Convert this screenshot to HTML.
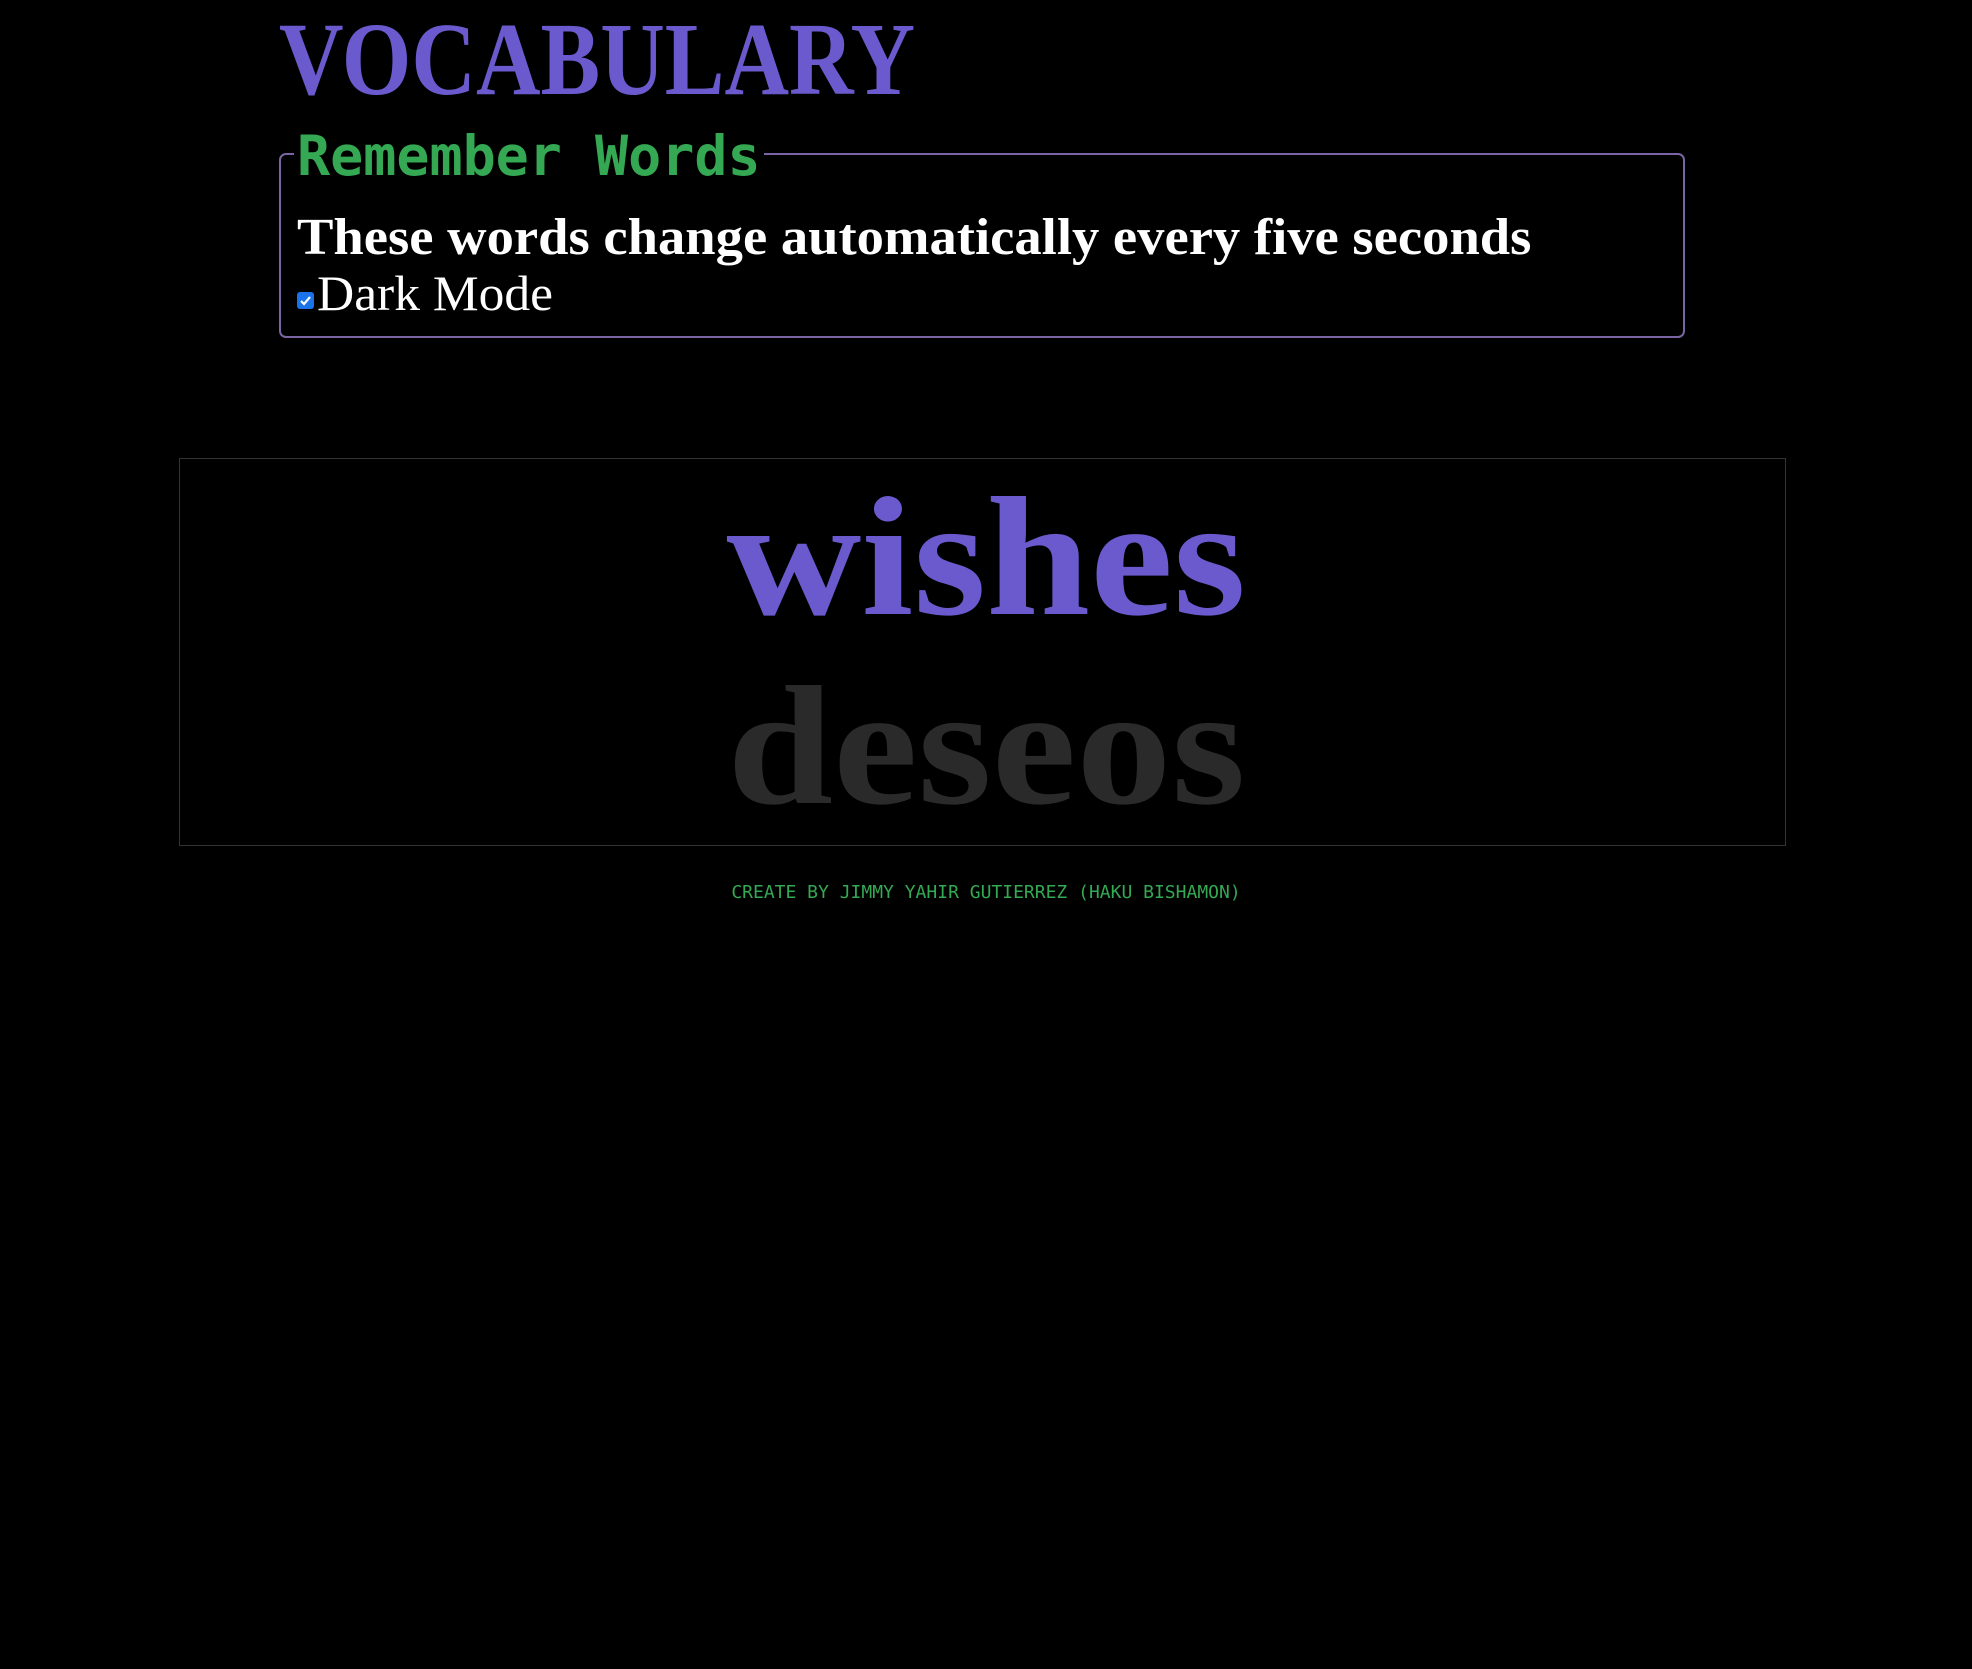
<!DOCTYPE html>
<html><head><meta charset="utf-8"><style>
html,body{margin:0;padding:0;background:#000;width:1972px;height:1669px;overflow:hidden}
.a{position:absolute;white-space:nowrap;line-height:1}
.s{transform-origin:left top;display:inline-block}
</style></head><body>
<div class="a" style="left:279px;top:0px;font:bold 104px 'Liberation Serif',serif;color:#6a5acd"><span class="s" style="transform:scaleX(0.86)">VOCABULARY</span></div>
<div class="a" style="left:279px;top:153px;width:1402px;height:181px;border:2px solid #7a64a3;border-radius:7px"></div>
<div class="a" style="left:294px;top:124px;padding:0 3px;background:#000;font:bold 55px 'DejaVu Sans Mono','Liberation Mono',monospace;color:#34a853">Remember Words</div>
<div class="a" style="left:297px;top:208px;font:bold 52px 'Liberation Serif',serif;color:#fff"><span class="s" style="transform:scaleX(1.05)">These words change automatically every five seconds</span></div>
<div class="a" style="left:297px;top:292px;width:17px;height:17px;background:#1a73e8;border-radius:3px"><svg width="17" height="17" viewBox="0 0 17 17"><path d="M4 9 L7 12 L13 5" stroke="#fff" stroke-width="2.2" fill="none"/></svg></div>
<div class="a" style="left:317px;top:264px;font:50px 'Liberation Serif',serif;color:#fff"><span class="s" style="transform:scaleX(1.03)">Dark Mode</span></div>
<div class="a" style="left:179px;top:458px;width:1605px;height:386px;border:1px solid #333"></div>
<div class="a" style="left:0;width:1972px;top:460px;text-align:center;font:bold 170px 'Liberation Serif',serif;color:#6a5acd"><span style="display:inline-block;transform:scaleX(1.1)">wishes</span></div>
<div class="a" style="left:0;width:1972px;top:649px;text-align:center;font:bold 170px 'Liberation Serif',serif;color:#2a2a2a"><span style="display:inline-block;transform:scaleX(1.12)">deseos</span></div>
<div class="a" style="left:0;width:1972px;top:882px;text-align:center;font:18px 'DejaVu Sans Mono','Liberation Mono',monospace;color:#34a853">CREATE BY JIMMY YAHIR GUTIERREZ (HAKU BISHAMON)</div>
</body></html>
